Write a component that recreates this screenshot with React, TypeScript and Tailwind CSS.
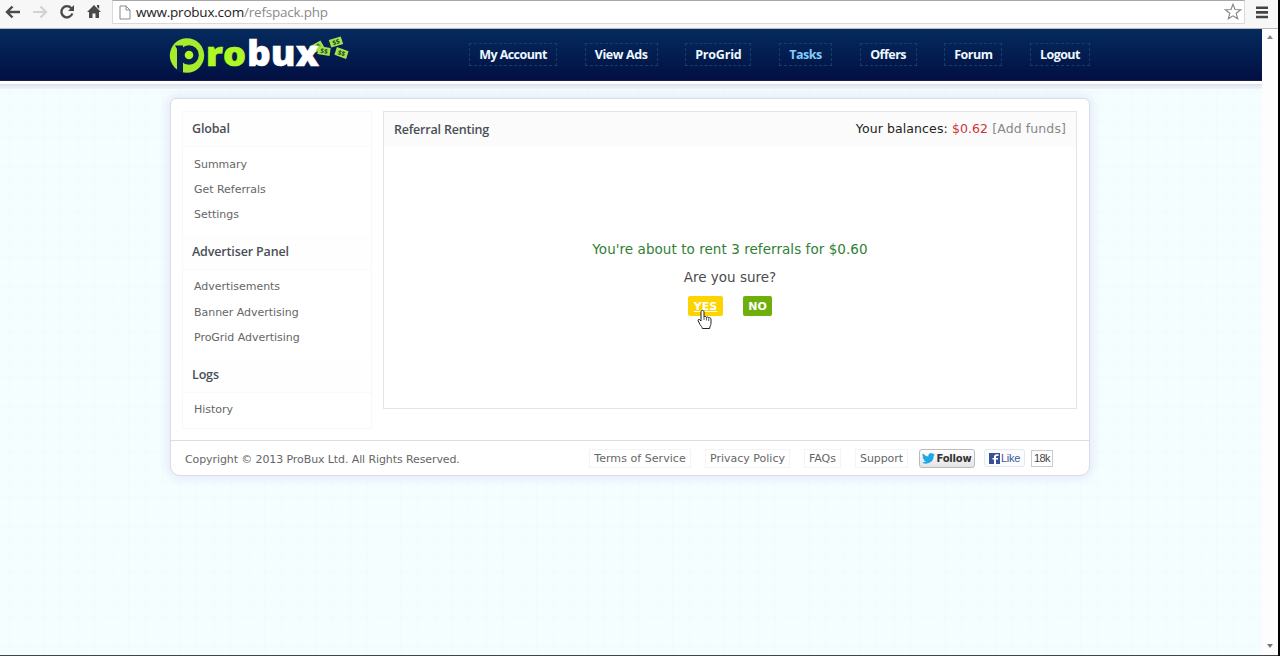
import type { ReactNode } from 'react'

const navItems = [
  { label: 'My Account', box: 'w-[88px] tracking-[-0.55px]' },
  { label: 'View Ads', box: 'w-[73px] tracking-[-0.4px]' },
  { label: 'ProGrid', box: 'w-[66px] tracking-[-0.2px]' },
  { label: 'Tasks', box: 'w-[53px] tracking-[-0.5px]', active: true },
  { label: 'Offers', box: 'w-[57px] tracking-[-0.5px]' },
  { label: 'Forum', box: 'w-[58px] tracking-[-0.5px]' },
  { label: 'Logout', box: 'w-[60px] tracking-[-0.6px]' },
]

const sections = [
  { title: 'Global', links: ['Summary', 'Get Referrals', 'Settings'] },
  { title: 'Advertiser Panel', links: ['Advertisements', 'Banner Advertising', 'ProGrid Advertising'] },
  { title: 'Logs', links: ['History'] },
]

const footerLinks = [
  { label: 'Terms of Service', box: 'w-[102px] tracking-[0.05px]' },
  { label: 'Privacy Policy', box: 'w-[85px]' },
  { label: 'FAQs', box: 'w-[37px]' },
  { label: 'Support', box: 'w-[53px] tracking-[-0.1px]' },
]

function BrowserBar() {
  return (
    <div className="flex h-[29px] items-start border-b border-[#b9b9b9] bg-[#f8f7f8]">
      <div className="flex h-6 w-[112px] shrink-0 items-center">
        <svg width="112" height="24" viewBox="0 0 112 24" fill="none">
          <path d="M20 12H7M12.5 6.5L7 12l5.5 5.5" stroke="#4a4a4a" strokeWidth="2.4" />
          <path d="M33 12h13M40.5 6.5L46 12l-5.5 5.5" stroke="#d2d2d2" strokeWidth="2.2" />
          <path d="M71.3 8.2A5.6 5.6 0 1 0 72.3 13.5" stroke="#4a4a4a" strokeWidth="2.4" />
          <path d="M74 5v6h-6z" fill="#4a4a4a" />
          <path d="M94 5l7 7h-2v6h-3.5v-4.5h-3V18H89v-6h-2z" fill="#4a4a4a" />
          <path d="M97 5h2.2v4L97 7z" fill="#4a4a4a" />
        </svg>
      </div>
      <div className="flex h-6 flex-1 items-center border border-[#dcd9db] border-t-[#a8a8a8] bg-white pl-[6px]">
        <svg width="12" height="15" viewBox="0 0 12 15" fill="none" stroke="#8a8a8a">
          <path d="M1 1h6l4 4v9H1zM7 1v4h4" />
        </svg>
        <span className="ml-[5px] font-['Open_Sans','Noto_Sans',sans-serif] text-[13.5px] leading-[22px] tracking-[-0.22px] text-[#222]">
          www.probux.com<span className="text-[#8b8b8b]">/refspack.php</span>
        </span>
        <svg className="ml-auto mr-[2px]" width="18" height="18" viewBox="0 0 18 18" fill="none" stroke="#858585" strokeWidth="1.1">
          <path d="M9 1.2l2 5.3 5.6.3-4.4 3.5 1.5 5.5L9 12.8l-4.7 3 1.5-5.5-4.4-3.500 5.600-.3z" />
        </svg>
      </div>
      <div className="flex h-6 w-[33px] items-center justify-center">
        <svg width="14" height="13" viewBox="0 0 14 13">
          <path d="M1 1.8h12M1 6.4h12M1 11h12" stroke="#444" strokeWidth="2.6" />
        </svg>
      </div>
    </div>
  )
}

function Bill({ transform }: { transform: string }) {
  return (
    <g transform={transform}>
      <path d="M-6.2-4.2l12.4.4v8l-12.400-.4z" fill="#a4e24c" />
      <text x="0" y="2.4" textAnchor="middle" fontSize="6.5" fontWeight="700" fill="#1c4a2a">
        $$
      </text>
    </g>
  )
}

function Logo() {
  return (
    <svg width="182" height="46" viewBox="166 32 182 46" className="block overflow-visible font-['Open_Sans',sans-serif]">
      <circle cx="187" cy="55.5" r="17.2" fill="#a6ec2c" />
      <circle cx="189" cy="55" r="9.8" fill="#041f50" />
      <path d="M175 45.500h8v27.500l-6-2.500V49z" fill="#041f50" />
      <circle cx="189" cy="55" r="4.300" fill="#b0f823" />
      <Bill transform="translate(317 47) rotate(-30)" />
      <text x="206" y="66" fontSize="34" fontWeight="800" fill="#b0f823" stroke="#b0f823" strokeWidth=".6" textLength="40" lengthAdjust="spacingAndGlyphs">
        ro
      </text>
      <text x="247" y="66" fontSize="36" fontWeight="800" fill="#fff" stroke="#fff" strokeWidth=".5" textLength="72" lengthAdjust="spacingAndGlyphs">
        bux
      </text>
      <Bill transform="translate(324 51) rotate(8)" />
      <Bill transform="translate(336 42) rotate(-18)" />
      <Bill transform="translate(341.5 53) rotate(18)" />
    </svg>
  )
}

function Header() {
  return (
    <header>
      <div className="flex h-[52px] border-b border-[#1a1c4c] bg-linear-to-b from-[#062b5f] to-[#020f42]">
        <div className="ml-[166px] mt-[3px] w-[182px]">
          <Logo />
        </div>
        <nav className="ml-[121px] mt-[14px] flex w-[621px] items-start justify-between">
          {navItems.map((item) => (
            <a
              key={item.label}
              className={`flex h-[23px] items-center justify-center whitespace-nowrap border border-dashed border-[#123f6b] pt-[2px] font-['Open_Sans','Noto_Sans',sans-serif] text-[12.5px] font-bold ${item.box} ${
                item.active ? 'text-[#83cdfb]' : 'text-[#eef8ff]'
              }`}
            >
              {item.label}
            </a>
          ))}
        </nav>
      </div>
      <div className="h-[3px] bg-white"></div>
      <div className="h-[5px] bg-linear-to-b from-[#dfe1e8] to-[#eef4fc]"></div>
    </header>
  )
}

function Sidebar() {
  return (
    <aside className="h-[318px] w-[190px] border border-[#f8f8fa]">
      {sections.map((section) => (
        <div key={section.title}>
          <h2 className="h-[35px] border-b border-[#f9f9fb] bg-[#fefefe] pl-[9px] font-['Open_Sans','Noto_Sans',sans-serif] text-[12.5px] font-semibold leading-[33px] tracking-[-0.15px] text-[#4a4f57]">
            {section.title}
          </h2>
          <ul className="pb-[7.5px] pt-[4.5px]">
            {section.links.map((link) => (
              <li key={link} className="h-[25.33px] pl-[11px] text-[11px] leading-[25px] tracking-[-0.03px] text-[#666]">
                {link}
              </li>
            ))}
          </ul>
        </div>
      ))}
    </aside>
  )
}

function Confirm({ children, className }: { children: ReactNode; className: string }) {
  return (
    <button className={`h-5 rounded-[2px] pt-px text-[11px] font-bold leading-5 text-white ${className}`}>
      {children}
    </button>
  )
}

function HandCursor() {
  return (
    <svg className="absolute left-[9px] top-[13px]" width="17" height="21" viewBox="0 0 17 21">
      <path
        d="M5.5 1.5c1 0 1.5.6 1.5 1.500v5c.3-.9 2.200-.8 2.400.4.500-.8 2.200-.5 2.300.6.800-.6 2.300-.1 2.300 1.100v4.200c0 2-1.300 2.800-1.300 5.200H5.300c0-1.500-1.600-2.500-2.300-4L1.200 12c-.6-1.300.7-2.200 1.700-1.200L4 12V3c0-.9.500-1.500 1.500-1.500z"
        fill="#fff"
        stroke="#222"
      />
      <path d="M7 8v3M9.4 8.5v3M11.7 9.5v2.5" stroke="#333" strokeWidth=".8" />
    </svg>
  )
}

function RentPanel() {
  return (
    <main className="h-[298px] w-[694px] border border-[#e3e3e8]">
      <div className="flex h-[35px] items-center justify-between bg-[#fbfbfc] pl-[10px] pr-[10px]">
        <h1 className="pt-[2px] font-['Open_Sans','Noto_Sans',sans-serif] text-[12.5px] font-semibold tracking-[-0.2px] text-[#4a4f57]">
          Referral Renting
        </h1>
        <p className="text-[12.5px] tracking-[0.1px] text-[#222]">
          Your balances: <span className="text-[#cf3434]">$0.62</span> <span className="text-[#888]">[Add funds]</span>
        </p>
      </div>
      <div className="flex flex-col items-center pt-[92px] text-[13.5px] leading-[20px]">
        <p className="tracking-[0.06px] text-[#2f8033]">You're about to rent 3 referrals for $0.60</p>
        <p className="mt-2 text-[#4c4c4c]">Are you sure?</p>
        <div className="mt-[9px] flex gap-[20px]">
          <div className="relative flex">
            <Confirm className="w-[35px] bg-[#fdd400] underline">YES</Confirm>
            <HandCursor />
          </div>
          <Confirm className="w-[29px] bg-[#70ae0c]">NO</Confirm>
        </div>
      </div>
    </main>
  )
}

function Footer() {
  return (
    <footer className="flex h-[35px] items-center border-t border-[#dcdce6] pl-[14px] text-[11px] text-[#666]">
      <span className="w-[404px] whitespace-nowrap pt-[4px] tracking-[-0.1px]">
        Copyright © 2013 ProBux Ltd. All Rights Reserved.
      </span>
      <div className="flex gap-[14px]">
        {footerLinks.map((link) => (
          <a
            key={link.label}
            className={`flex h-[19px] items-center justify-center whitespace-nowrap border border-[#f4f4f6] pt-[2px] ${link.box}`}
          >
            {link.label}
          </a>
        ))}
      </div>
      <a className="ml-[11px] flex h-[19px] w-[56px] items-center justify-center gap-px rounded-[3px] border border-[#bbb] bg-linear-to-b from-white to-[#e4e4e4] text-[10px] font-bold tracking-[-0.2px] text-[#333]">
        <svg width="13" height="11" viewBox="0 0 24 20" fill="#1da9e8">
          <path d="M24 2.4a10 10 0 0 1-2.8.8A5 5 0 0 0 23.3.4a10 10 0 0 1-3.1 1.2 4.9 4.9 0 0 0-8.4 4.5A14 14 0 0 1 1.7.9a4.9 4.9 0 0 0 1.5 6.6 5 5 0 0 1-2.2-.6 4.900 4.900 0 0 0 3.900 4.900 5 5 0 0 1-2.200.1 4.900 4.900 0 0 0 4.600 3.400A9.900 9.900 0 0 1 0 17.300a14 14 0 0 0 21.500-12.400A10 10 0 0 0 24 2.400z" />
        </svg>
        Follow
      </a>
      <a className="ml-[9px] flex h-[18px] w-[41px] items-center justify-center gap-px rounded-[3px] border border-[#e6e8f0] bg-[#fbfcfe] font-['Liberation_Sans',Arial,sans-serif] text-[11px] tracking-[-0.3px] text-[#3b5998]">
        <svg width="11" height="11" viewBox="0 0 11 11">
          <path d="M0 0h11v11H0z" fill="#3b4f96" />
          <path d="M7 11V6.500h2V5H7V4c0-.8.400-1 1-1h1.500V1.300H7.600C6 1.300 5 2.200 5 3.700V5H3.500v1.500H5V11z" fill="#fff" />
        </svg>
        Like
      </a>
      <span className="ml-[6px] flex h-[17px] w-[22px] items-center justify-center border border-[#ccc] bg-white font-['Liberation_Sans',Arial,sans-serif] text-[11px] tracking-[-0.5px] text-[#444]">
        18k
      </span>
    </footer>
  )
}

export default function App() {
  return (
    <div className="flex h-[656px] w-[1280px] flex-col overflow-hidden border-r-2 border-black bg-white font-['DejaVu_Sans',Verdana,sans-serif]">
      <BrowserBar />
      <div className="flex h-[626px]">
        <div className="w-[1262px] bg-[#f5feff] bg-[repeating-linear-gradient(90deg,transparent_0_9px,#eaf5fd33_9px_11px,transparent_11px_17px),repeating-linear-gradient(0deg,transparent_0_7px,#eaf5fd33_7px_9px,transparent_9px_15px)]">
          <Header />
          <div className="ml-[170px] mt-[9px] h-[378px] w-[920px] rounded-[6px] rounded-b-[10px] border border-[#dcdce4] bg-white shadow-[0_0_10px_3px_#e4ecf8]">
            <div className="flex h-[341px] gap-[11px] pl-[11px] pt-[12px]">
              <Sidebar />
              <RentPanel />
            </div>
            <Footer />
          </div>
        </div>
        <div className="flex w-4 flex-col items-center justify-between bg-[#fdfdfd] pb-[7px] pt-[6px]">
          <svg width="6" height="4" viewBox="0 0 6 4">
            <path d="M0 4l3-4 3 4z" fill="#888" />
          </svg>
          <svg width="6" height="4" viewBox="0 0 6 4">
            <path d="M0 0l3 4 3-4z" fill="#777" />
          </svg>
        </div>
      </div>
      <div className="h-px bg-[#3d464b]"></div>
    </div>
  )
}
